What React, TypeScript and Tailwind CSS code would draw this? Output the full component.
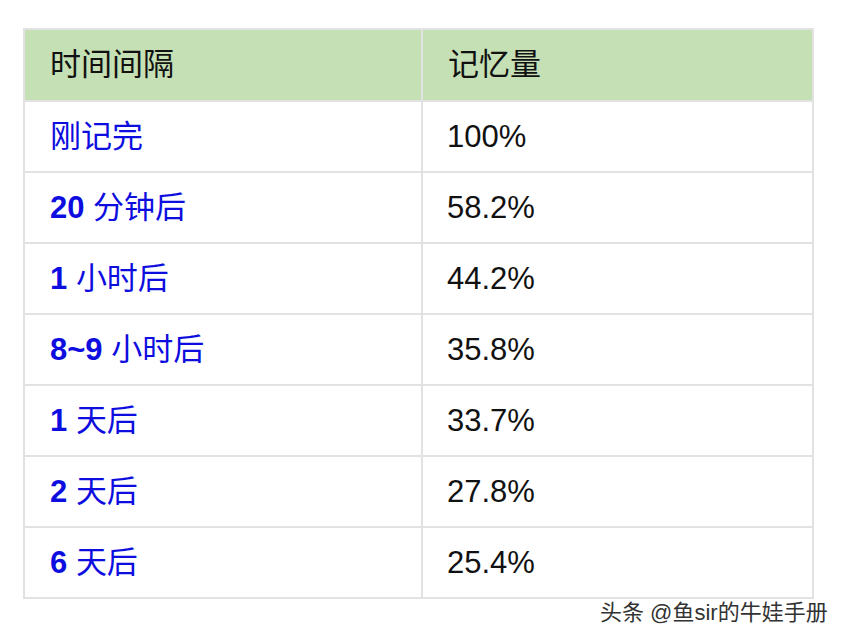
import React from 'react';

const rows = [
  { num: '', label: '刚记完', value: '100%' },
  { num: '20', label: '分钟后', value: '58.2%' },
  { num: '1', label: '小时后', value: '44.2%' },
  { num: '8~9', label: '小时后', value: '35.8%' },
  { num: '1', label: '天后', value: '33.7%' },
  { num: '2', label: '天后', value: '27.8%' },
  { num: '6', label: '天后', value: '25.4%' },
];

const font = { fontFamily: '"Liberation Sans", "Noto Sans CJK SC", sans-serif' };

export default function App() {
  return (
    <div className="w-[844px] h-[640px] bg-white overflow-hidden" style={font}>
      <table className="ml-[23px] mt-[28px] w-[791px] border-collapse table-fixed text-[31px]">
        <colgroup>
          <col className="w-[398px]" />
          <col />
        </colgroup>
        <thead>
          <tr className="h-[72px] bg-[#c5e0b4] text-[#111]">
            <th className="border-2 border-[#e2e2e2] pl-[25px] text-left font-normal">时间间隔</th>
            <th className="border-2 border-[#e2e2e2] pl-[25px] text-left font-normal">记忆量</th>
          </tr>
        </thead>
        <tbody>
          {rows.map((r, i) => (
            <tr key={i} className="h-[71px]">
              <td className="border-2 border-[#e2e2e2] pl-[25px] pt-[2px] text-[#0d0de0]">
                {r.num && <span className="font-bold">{r.num} </span>}
                <span>{r.label}</span>
              </td>
              <td className="border-2 border-[#e2e2e2] pl-[24px] pt-[2px] text-[#111]">{r.value}</td>
            </tr>
          ))}
        </tbody>
      </table>
      <div
        className="mt-[1px] pl-[600px] text-[22px] leading-[26px] text-[#333] whitespace-nowrap"
        style={{ textShadow: '1px 1px 0 #fff, -1px -1px 0 #fff, 1px -1px 0 #fff, -1px 1px 0 #fff' }}
      >
        头条 @鱼sir的牛娃手册
      </div>
    </div>
  );
}
